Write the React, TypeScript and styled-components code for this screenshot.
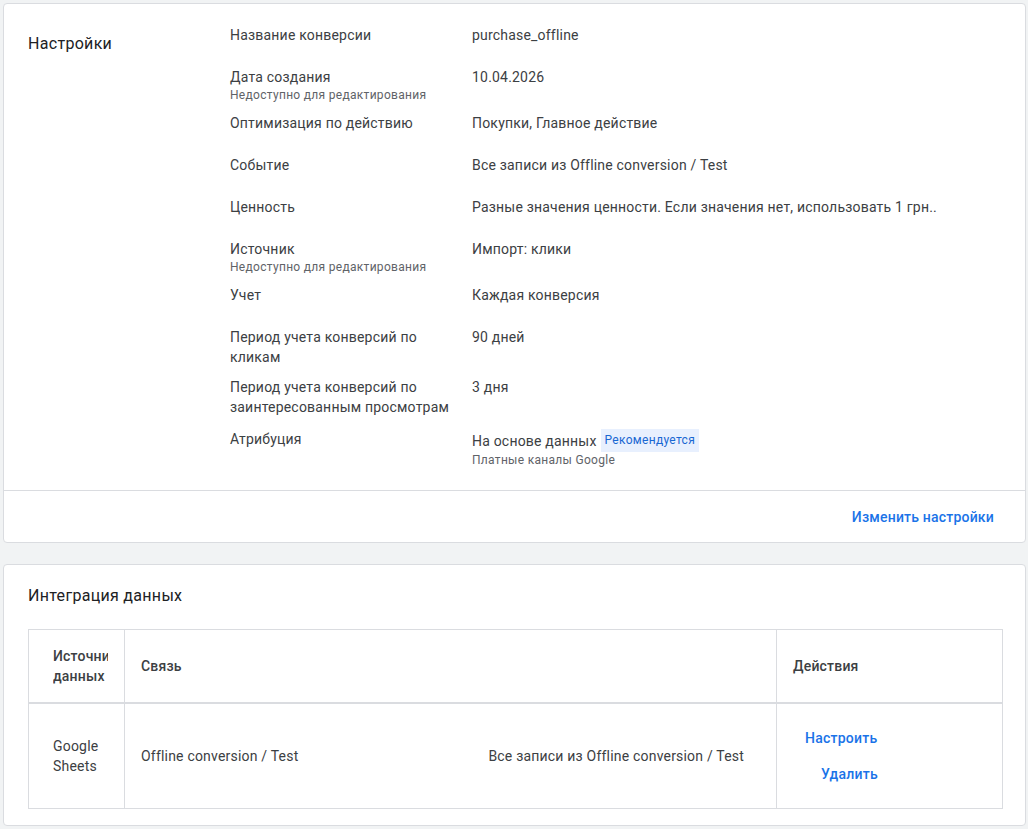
import React from "react";
import styled, { createGlobalStyle } from "styled-components";

const GlobalStyle = createGlobalStyle`
  html, body {
    margin: 0;
    padding: 0;
    background: #f1f3f4;
    font-family: Roboto, "Noto Sans", Arial, sans-serif;
    -webkit-font-smoothing: antialiased;
  }
  * { box-sizing: border-box; }
`;

const Page = styled.div`
  padding: 3px 2px 0 3px;
  display: flex;
  flex-direction: column;
  gap: 21px;
`;

const Card = styled.section`
  background: #fff;
  border: 1px solid #dadce0;
  border-radius: 4px;
`;

const SettingsBody = styled.div`
  display: flex;
  padding: 21px 24px 12px 24px;
`;

const SectionTitle = styled.h2`
  margin: 0;
  font-size: 16px;
  line-height: 24px;
  font-weight: 400;
  color: #202124;
  letter-spacing: 0.3px;
`;

const SettingsTitle = styled(SectionTitle)`
  width: 202px;
  flex: none;
  padding-top: 7px;
`;

const Rows = styled.div`
  display: flex;
  flex-direction: column;
  flex: 1;
`;

const Row = styled.div<{ $top?: number }>`
  display: grid;
  grid-template-columns: 242px 1fr;
  min-height: 42px;
  padding-top: ${(p) => p.$top ?? 0}px;
  padding-bottom: 10px;
`;

const Label = styled.div`
  padding-right: 14px;
  font-size: 14px;
  line-height: 20px;
  letter-spacing: 0.2px;
  color: #3c4043;
`;

const Value = styled.div`
  font-size: 14px;
  line-height: 20px;
  letter-spacing: 0.2px;
  color: #3c4043;
`;

const Sub = styled.div`
  font-size: 12px;
  line-height: 16px;
  letter-spacing: 0.3px;
  color: #5f6368;
`;

const ValueLine = styled.div`
  display: flex;
  align-items: center;
  min-height: 23px;
`;

const Chip = styled.span`
  margin-left: 4px;
  background: #e8f0fe;
  color: #1967d2;
  font-size: 12px;
  line-height: 23px;
  letter-spacing: 0.3px;
  padding: 0 4px;
`;

const Footer = styled.div`
  border-top: 1px solid #dadce0;
  display: flex;
  justify-content: flex-end;
  padding: 8px 23px 7px;
`;

const TextButton = styled.button<{ $indent?: number }>`
  border: none;
  background: none;
  font-family: inherit;
  font-size: 14px;
  line-height: 20px;
  font-weight: 500;
  letter-spacing: 0.25px;
  color: #1a73e8;
  padding: 8px;
  margin-left: ${(p) => p.$indent ?? 0}px;
  cursor: pointer;
`;

const FooterButton = styled(TextButton)`
  letter-spacing: 0.2px;
`;

const IntegrationCard = styled(Card)`
  padding: 19px 22px 16px 24px;
`;

const IntegrationTitle = styled(SectionTitle)`
  margin-bottom: 21px;
`;

const Table = styled.table`
  width: 100%;
  border-collapse: collapse;
  table-layout: fixed;
  border: 1px solid #dadce0;
`;

const HeadCell = styled.th<{ $padLeft: number }>`
  text-align: left;
  font-size: 14px;
  line-height: 20px;
  font-weight: 500;
  letter-spacing: 0.2px;
  color: #3c4043;
  height: 73px;
  padding: 0 16px 0 ${(p) => p.$padLeft}px;
  border-left: 1px solid #dadce0;
  border-bottom: 2px solid #dadce0;
  vertical-align: middle;
`;

const Cell = styled.td<{ $padLeft: number }>`
  font-size: 14px;
  line-height: 20px;
  letter-spacing: 0.2px;
  color: #3c4043;
  height: 106px;
  padding: 0 16px 0 ${(p) => p.$padLeft}px;
  border-left: 1px solid #dadce0;
  vertical-align: middle;
`;

const Clip = styled.div`
  overflow: hidden;
`;

const LinkCell = styled.div`
  display: flex;
  justify-content: space-between;
  padding-right: 16px;
`;

const Actions = styled.div`
  display: flex;
  flex-direction: column;
  align-items: flex-start;
`;

type RowData = { label: string; sub?: string; value: React.ReactNode; top?: number };

const rows: RowData[] = [
  { label: "Название конверсии", value: "purchase_offline" },
  { label: "Дата создания", sub: "Недоступно для редактирования", value: "10.04.2026" },
  { label: "Оптимизация по действию", value: "Покупки, Главное действие" },
  { label: "Событие", value: "Все записи из Offline conversion / Test" },
  { label: "Ценность", value: "Разные значения ценности. Если значения нет, использовать 1 грн.." },
  { label: "Источник", sub: "Недоступно для редактирования", value: "Импорт: клики" },
  { label: "Учет", value: "Каждая конверсия" },
  { label: "Период учета конверсий по кликам", value: "90 дней" },
  { label: "Период учета конверсий по заинтересованным просмотрам", value: "3 дня" },
  {
    label: "Атрибуция",
    top: 2,
    value: (
      <>
        <ValueLine>
          На основе данных<Chip>Рекомендуется</Chip>
        </ValueLine>
        <Sub>Платные каналы Google</Sub>
      </>
    ),
  },
];

export default function App() {
  return (
    <>
      <GlobalStyle />
      <Page>
        <Card>
          <SettingsBody>
            <SettingsTitle>Настройки</SettingsTitle>
            <Rows>
              {rows.map((r) => (
                <Row key={r.label} $top={r.top}>
                  <Label>
                    {r.label}
                    {r.sub && <Sub>{r.sub}</Sub>}
                  </Label>
                  <Value>{r.value}</Value>
                </Row>
              ))}
            </Rows>
          </SettingsBody>
          <Footer>
            <FooterButton>Изменить настройки</FooterButton>
          </Footer>
        </Card>

        <IntegrationCard>
          <IntegrationTitle>Интеграция данных</IntegrationTitle>
          <Table>
            <colgroup>
              <col style={{ width: 96 }} />
              <col />
              <col style={{ width: 226 }} />
            </colgroup>
            <thead>
              <tr>
                <HeadCell $padLeft={24}>
                  <Clip>Источник данных</Clip>
                </HeadCell>
                <HeadCell $padLeft={16}>Связь</HeadCell>
                <HeadCell $padLeft={16}>Действия</HeadCell>
              </tr>
            </thead>
            <tbody>
              <tr>
                <Cell $padLeft={24}>Google Sheets</Cell>
                <Cell $padLeft={16}>
                  <LinkCell>
                    <span>Offline conversion / Test</span>
                    <span>Все записи из Offline conversion / Test</span>
                  </LinkCell>
                </Cell>
                <Cell $padLeft={16}>
                  <Actions>
                    <TextButton $indent={4}>Настроить</TextButton>
                    <TextButton $indent={20}>Удалить</TextButton>
                  </Actions>
                </Cell>
              </tr>
            </tbody>
          </Table>
        </IntegrationCard>
      </Page>
    </>
  );
}
